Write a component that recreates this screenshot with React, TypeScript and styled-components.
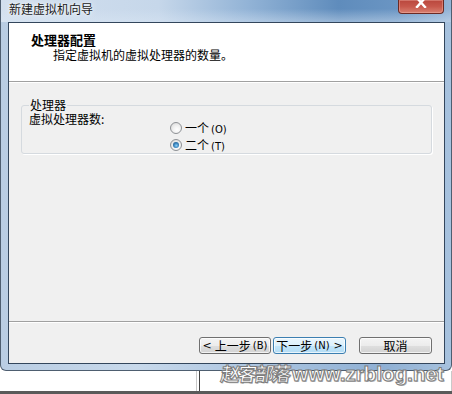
import React from 'react';
import styled, { createGlobalStyle } from 'styled-components';

const cjk = `"Noto Sans CJK SC", "DejaVu Sans", sans-serif`;

const GlobalStyle = createGlobalStyle`
  html, body {
    margin: 0;
    padding: 0;
    background: #ffffff;
  }
  body {
    font-family: ${cjk};
    font-size: 12px;
    color: #000;
  }
`;

const Screen = styled.div`
  position: relative;
  width: 452px;
  height: 394px;
  overflow: hidden;
  background: #ffffff;
`;

// window frame (aero glass)
const Frame = styled.div`
  box-sizing: border-box;
  width: 452px;
  height: 371px;
  display: flex;
  flex-direction: column;
  border: 1px solid #4e5e70;
  border-top: none;
  border-radius: 0 0 6px 6px;
  background: linear-gradient(to right, #b9cde3 0%, #c8d9eb 30%, #a9c3df 60%, #8fb0d4 85%, #a7c2de 100%);
`;

const TitleBar = styled.div`
  height: 22px;
  flex: none;
  display: flex;
  align-items: flex-start;
  padding: 0 7px 0 8px;
  background:
    linear-gradient(to bottom, rgba(255, 255, 255, 0) 40%, rgba(220, 232, 245, 0.45) 100%),
    linear-gradient(to right, #d3e0ee 0%, #c6d7ea 35%, #92b3d6 55%, #5f8cbc 75%, #6a95c3 88%, #94b4d6 100%);
`;

const Title = styled.div`
  padding-top: 1px;
  line-height: 16px;
  font-size: 12px;
  color: #1a1a1a;
  text-shadow: 0 0 6px rgba(255, 255, 255, 0.9), 0 0 2px rgba(255, 255, 255, 0.9);
`;

const CloseButton = styled.div`
  margin-left: auto;
  width: 46px;
  height: 14px;
  box-sizing: border-box;
  border: 1px solid #6b2a24;
  border-top: none;
  border-radius: 0 0 4px 4px;
  background: linear-gradient(to bottom, #b9463c 0%, #c7584c 50%, #d88070 100%);
  box-shadow: inset 0 0 0 1px rgba(255, 200, 190, 0.35);
  display: flex;
  justify-content: center;
  overflow: hidden;
`;

const Client = styled.div`
  height: 342px;
  box-sizing: border-box;
  margin: 0 6px 0 7px;
  border: 1px solid #33465c;
  display: flex;
  flex-direction: column;
  background: #f0f0f0;
`;

const Header = styled.div`
  height: 58px;
  box-sizing: border-box;
  background: #ffffff;
  padding: 9px 0 0 22px;
`;

const HeaderTitle = styled.div`
  font-weight: bold;
  font-size: 13px;
  line-height: 15px;
`;

const HeaderSub = styled.div`
  margin-left: 22px;
  line-height: 15px;
  font-size: 12px;
`;

const Separator = styled.div`
  height: 1px;
  background: #a0a0a0;
  border-bottom: 1px solid #ffffff;
  flex: none;
`;

const Body = styled.div`
  height: 238px;
  box-sizing: border-box;
  padding: 15px 12px 0 12px;
`;

const Group = styled.fieldset`
  margin: 0;
  padding: 0 0 0 7px;
  border: 1px solid #d5dadf;
  border-radius: 3px;
  box-shadow: 1px 1px 0 #ffffff;
  display: flex;
  min-width: 0;
`;

const GroupTitle = styled.legend`
  padding: 0 1px;
  line-height: 14px;
  font-size: 12px;
`;

const FieldLabel = styled.div`
  width: 141px;
  flex: none;
  line-height: 14px;
`;

const RadioList = styled.div`
  padding-top: 7px;
  display: flex;
  flex-direction: column;
`;

const RadioRow = styled.div`
  height: 17px;
  display: flex;
  align-items: center;
  gap: 3px;
`;

const Radio = styled.span<{ $checked?: boolean }>`
  position: relative;
  width: 12px;
  height: 12px;
  box-sizing: border-box;
  border-radius: 50%;
  border: 1px solid #8e9195;
  background: radial-gradient(circle at 60% 65%, #ffffff 0%, #f2f2f2 40%, #d4d4d4 100%);
  &::after {
    content: '';
    display: ${(p) => (p.$checked ? 'block' : 'none')};
    position: absolute;
    left: 2px;
    top: 2px;
    width: 6px;
    height: 6px;
    border-radius: 50%;
    background: radial-gradient(circle at 55% 60%, #8fd0f5 0%, #3b86c0 45%, #17456e 100%);
  }
`;

const Accel = styled.span`
  font-family: "DejaVu Sans", sans-serif;
  font-size: 10px;
  margin-left: 2px;
`;

const Footer = styled.div`
  flex: 1;
  display: flex;
  justify-content: flex-end;
  align-items: flex-start;
  padding: 14px 12px 0 0;
`;

const Button = styled.div<{ $default?: boolean; $width: number; $gap?: number }>`
  width: ${(p) => p.$width}px;
  height: 17px;
  box-sizing: border-box;
  margin-left: ${(p) => p.$gap ?? 0}px;
  border: 1px solid ${(p) => (p.$default ? '#3c7fb1' : '#707070')};
  border-radius: 3px;
  background: ${(p) =>
    p.$default
      ? 'linear-gradient(to bottom, #eaf6fd 0%, #dcf0fb 50%, #c4e6fa 51%, #b2dcf5 100%)'
      : 'linear-gradient(to bottom, #f4f4f4 0%, #ececec 50%, #dfdfdf 51%, #d2d2d2 100%)'};
  box-shadow: inset 0 0 0 1px rgba(255, 255, 255, 0.7);
  display: flex;
  align-items: center;
  justify-content: center;
  line-height: 15px;
  font-size: 12px;
  white-space: nowrap;
`;

const Arrow = styled.span<{ $side: 'left' | 'right' }>`
  font-family: "DejaVu Sans", sans-serif;
  font-size: 11px;
  ${(p) => (p.$side === 'left' ? 'margin-right: 3px;' : 'margin-left: 4px;')}
`;

// what lies beneath the dialog
const Backdrop = styled.div`
  height: 23px;
  display: flex;
  border-bottom: 3px solid #5a5a5a;
  box-sizing: border-box;
`;

const BackPane = styled.div<{ $width?: number }>`
  ${(p) => (p.$width ? `width: ${p.$width}px;` : 'flex: 1;')}
  background: #ffffff;
  border-right: 1px solid #c9c9c9;
`;

const BackDivider = styled.div`
  width: 1px;
  margin-left: 2px;
  background: #444;
`;

const Watermark = styled.div`
  position: absolute;
  left: 221px;
  top: 361px;
  display: flex;
  align-items: flex-end;
  color: #ffffff;
  -webkit-text-stroke: 1px #7d7d7d;
  text-shadow: 1px 1px 0 #b8b8b8;
  white-space: nowrap;
`;

const WatermarkCjk = styled.span`
  font-family: ${cjk};
  font-weight: bold;
  font-size: 19px;
  letter-spacing: -2px;
  line-height: 24px;
  transform: skewX(-8deg);
`;

const WatermarkUrl = styled.span`
  font-family: "Liberation Sans", Arial, sans-serif;
  font-weight: bold;
  font-size: 21px;
  letter-spacing: -0.2px;
  line-height: 22px;
  margin-left: 3px;
`;

export default function App() {
  return (
    <Screen>
      <GlobalStyle />
      <Frame>
        <TitleBar>
          <Title>新建虚拟机向导</Title>
          <CloseButton>
            <svg width="12" height="10" viewBox="0 0 12 10" style={{ marginTop: -2 }}>
              <path d="M2 0 L10 9 M10 0 L2 9" stroke="#ffffff" strokeWidth="2.4" strokeLinecap="square" />
            </svg>
          </CloseButton>
        </TitleBar>
        <Client>
          <Header>
            <HeaderTitle>处理器配置</HeaderTitle>
            <HeaderSub>指定虚拟机的虚拟处理器的数量。</HeaderSub>
          </Header>
          <Separator />
          <Body>
            <Group>
              <GroupTitle>处理器</GroupTitle>
              <FieldLabel>虚拟处理器数:</FieldLabel>
              <RadioList>
                <RadioRow>
                  <Radio />
                  <span>
                    一个<Accel>(O)</Accel>
                  </span>
                </RadioRow>
                <RadioRow>
                  <Radio $checked />
                  <span>
                    二个<Accel>(T)</Accel>
                  </span>
                </RadioRow>
              </RadioList>
            </Group>
          </Body>
          <Separator />
          <Footer>
            <Button $width={72}>
              <Arrow $side="left">&lt;</Arrow>上一步<Accel>(B)</Accel>
            </Button>
            <Button $width={73} $gap={2} $default>
              下一步<Accel>(N)</Accel>
              <Arrow $side="right">&gt;</Arrow>
            </Button>
            <Button $width={73} $gap={13}>
              取消
            </Button>
          </Footer>
        </Client>
      </Frame>
      <Backdrop>
        <BackPane $width={196} />
        <BackDivider />
        <BackPane />
      </Backdrop>
      <Watermark>
        <WatermarkCjk>赵客部落</WatermarkCjk>
        <WatermarkUrl>www.zrblog.net</WatermarkUrl>
      </Watermark>
    </Screen>
  );
}
